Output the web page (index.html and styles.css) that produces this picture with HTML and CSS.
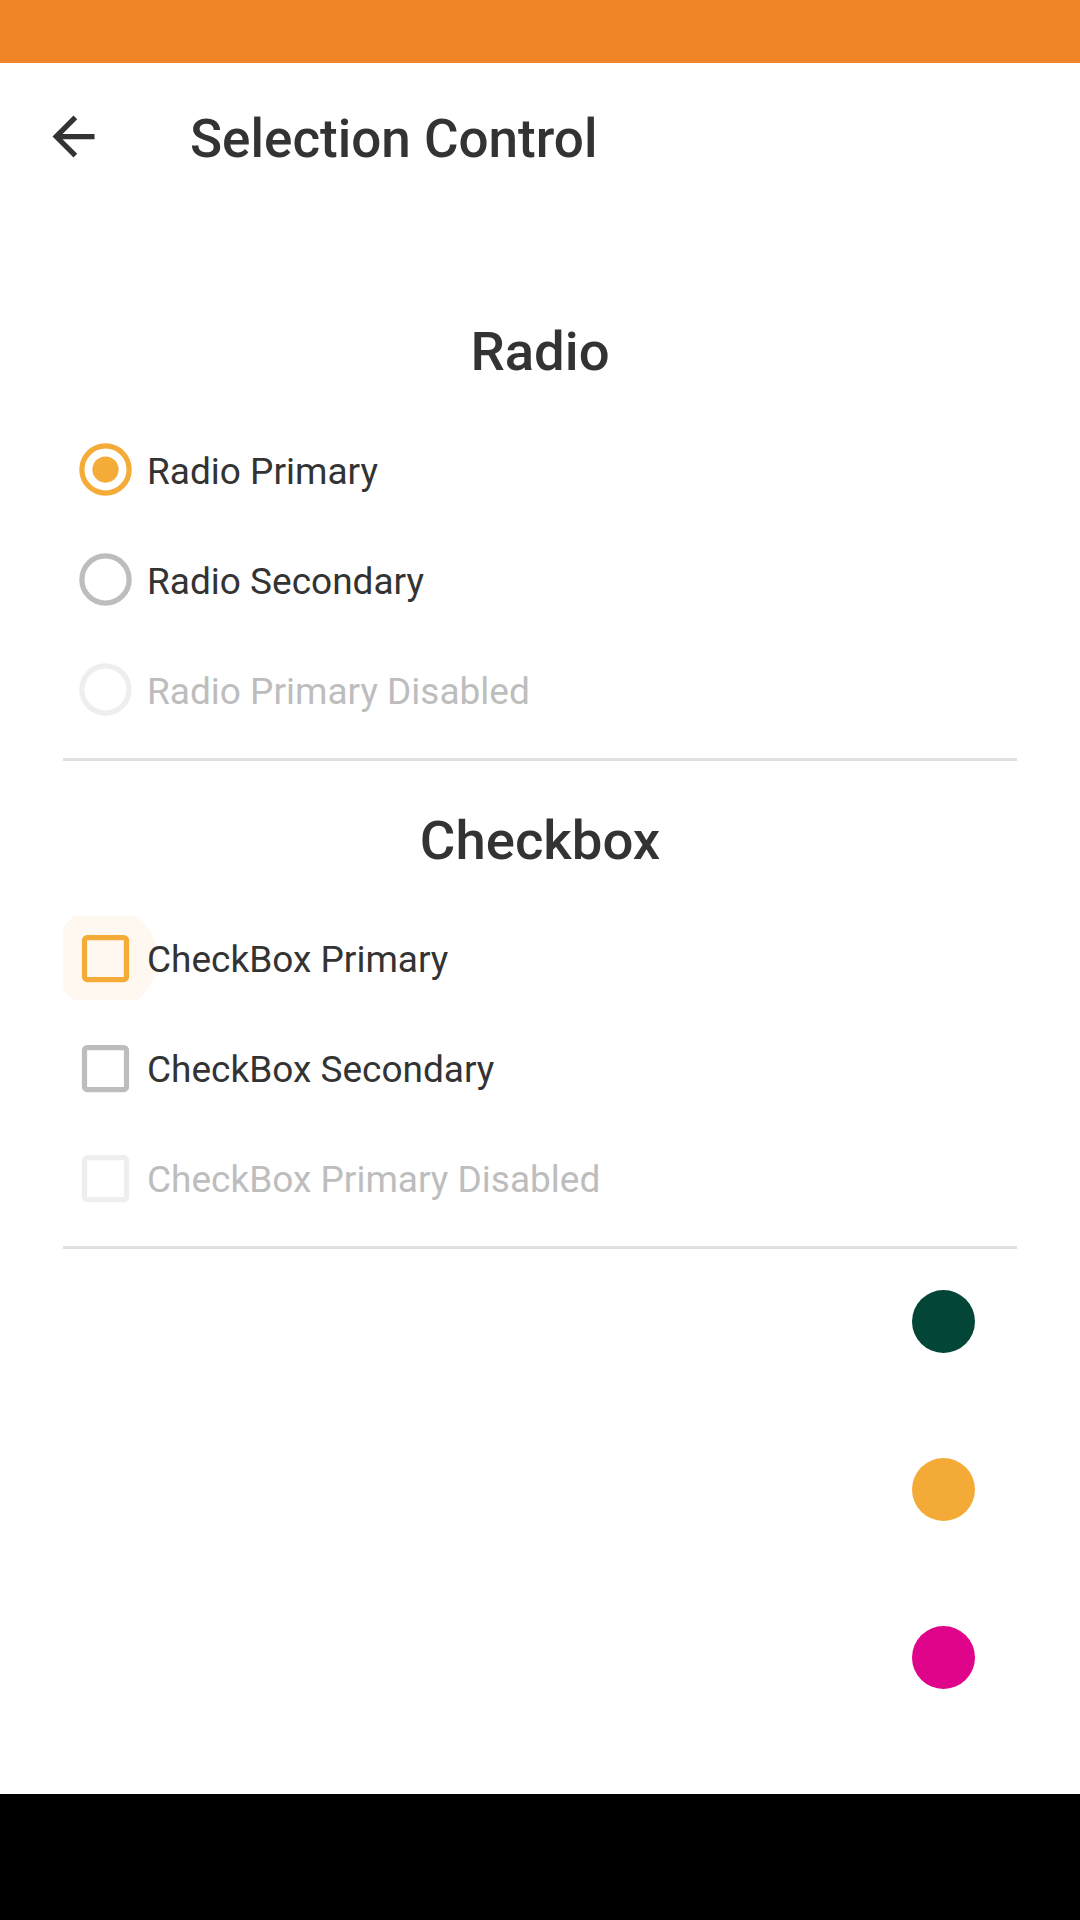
FILE: index.html
```html
<!DOCTYPE html>
<html lang="en">
<head>
<meta charset="utf-8">
<title>Selection Control</title>
<link rel="stylesheet" href="styles.css">
</head>
<body>
  <div class="statusbar"></div>
  <header class="toolbar">
    <svg class="back" viewBox="0 0 24 24" aria-hidden="true"><path d="M20 11H7.83l5.59-5.59L12 4l-8 8 8 8 1.41-1.41L7.83 13H20v-2z"/></svg>
    <h1 class="title">Selection Control</h1>
  </header>
  <main class="content">
    <section class="group">
      <h2 class="group-title">Radio</h2>
      <div class="option">
        <span class="control"><svg viewBox="0 0 24 24" class="radio radio-primary"><circle class="ring" cx="12" cy="12" r="9"/><circle class="dot-in" cx="12" cy="12" r="5"/></svg></span>
        <span class="label">Radio Primary</span>
      </div>
      <div class="option">
        <span class="control"><svg viewBox="0 0 24 24" class="radio radio-secondary"><circle class="ring" cx="12" cy="12" r="9"/></svg></span>
        <span class="label">Radio Secondary</span>
      </div>
      <div class="option disabled">
        <span class="control"><svg viewBox="0 0 24 24" class="radio radio-disabled"><circle class="ring" cx="12" cy="12" r="9"/></svg></span>
        <span class="label">Radio Primary Disabled</span>
      </div>
    </section>
    <hr class="divider">
    <section class="group group-check">
      <h2 class="group-title">Checkbox</h2>
      <div class="option">
        <span class="control focused"><svg viewBox="0 0 24 24" class="check check-primary"><rect class="box" x="4" y="4" width="16" height="16" rx="1"/></svg></span>
        <span class="label">CheckBox Primary</span>
      </div>
      <div class="option">
        <span class="control"><svg viewBox="0 0 24 24" class="check check-secondary"><rect class="box" x="4" y="4" width="16" height="16" rx="1"/></svg></span>
        <span class="label">CheckBox Secondary</span>
      </div>
      <div class="option disabled">
        <span class="control"><svg viewBox="0 0 24 24" class="check check-disabled"><rect class="box" x="4" y="4" width="16" height="16" rx="1"/></svg></span>
        <span class="label">CheckBox Primary Disabled</span>
      </div>
    </section>
    <hr class="divider">
    <div class="dots">
      <span class="dot dot-green"></span>
      <span class="dot dot-orange"></span>
      <span class="dot dot-magenta"></span>
    </div>
  </main>
  <div class="navbar"></div>
</body>
</html>
```
FILE: styles.css
```css
* { box-sizing: border-box; }
html, body {
  margin: 0;
  padding: 0;
  width: 1080px;
  height: 1920px;
  background: #ffffff;
  font-family: Roboto, "Noto Sans", "Liberation Sans", sans-serif;
  color: #333333;
}
body {
  display: flex;
  flex-direction: column;
  overflow: hidden;
}
.statusbar {
  height: 63px;
  flex: none;
  background: #EF8526;
}
.toolbar {
  height: 147px;
  flex: none;
  display: flex;
  align-items: center;
  padding-left: 42px;
}
.back {
  width: 63px;
  height: 63px;
  fill: #333333;
  flex: none;
}
.title {
  margin: 6px 0 0 85px;
  font-size: 53px;
  line-height: 61.5px;
  font-weight: 500;
  color: #333333;
}
.content {
  flex: 1;
  padding: 0 63px;
  display: flex;
  flex-direction: column;
}
.group {
  display: flex;
  flex-direction: column;
  gap: 26px;
}
.group-title {
  margin: 111px 0 19px;
  font-size: 54.5px;
  line-height: 61.5px;
  font-weight: 500;
  text-align: center;
  color: #333333;
}
.group-check .group-title {
  margin-top: 49px;
}
.option {
  height: 84px;
  display: flex;
  align-items: center;
  overflow: hidden;
}
.control {
  width: 84px;
  height: 84px;
  flex: none;
  display: flex;
  align-items: center;
  justify-content: center;
  position: relative;
}
.control.focused::before {
  content: "";
  position: absolute;
  left: -10.5px;
  top: -10.5px;
  width: 105px;
  height: 105px;
  border-radius: 50%;
  background: #FFF8F0;
}
.control svg {
  width: 63px;
  height: 63px;
  position: relative;
}
.label {
  position: relative;
  margin: 3px 0 0 0;
  font-size: 37px;
  line-height: 43px;
  color: #333333;
}
.option.disabled .label {
  color: #BDBDBD;
}
.radio .ring { fill: none; stroke-width: 2; }
.radio-primary .ring { stroke: #F4AB38; }
.radio-primary .dot-in { fill: #F4AB38; }
.radio-secondary .ring { stroke: #BDBDBD; }
.radio-disabled .ring { stroke: #EEEEEE; }
.check .box { fill: none; stroke-width: 2; }
.check-primary .box { stroke: #F4AB38; }
.check-secondary .box { stroke: #BDBDBD; }
.check-disabled .box { stroke: #EEEEEE; }
.divider {
  margin: 26px 0 0;
  height: 3px;
  border: 0;
  background: #E0E0E0;
}
.dots {
  margin-top: 41px;
  display: flex;
  flex-direction: column;
  align-items: flex-end;
  gap: 105px;
  padding-right: 42px;
}
.dot {
  width: 63px;
  height: 63px;
  border-radius: 50%;
  display: block;
}
.dot-green { background: #034638; }
.dot-orange { background: #F3AA37; }
.dot-magenta { background: #E0048B; }
.navbar {
  height: 126px;
  flex: none;
  background: #000000;
}
```
